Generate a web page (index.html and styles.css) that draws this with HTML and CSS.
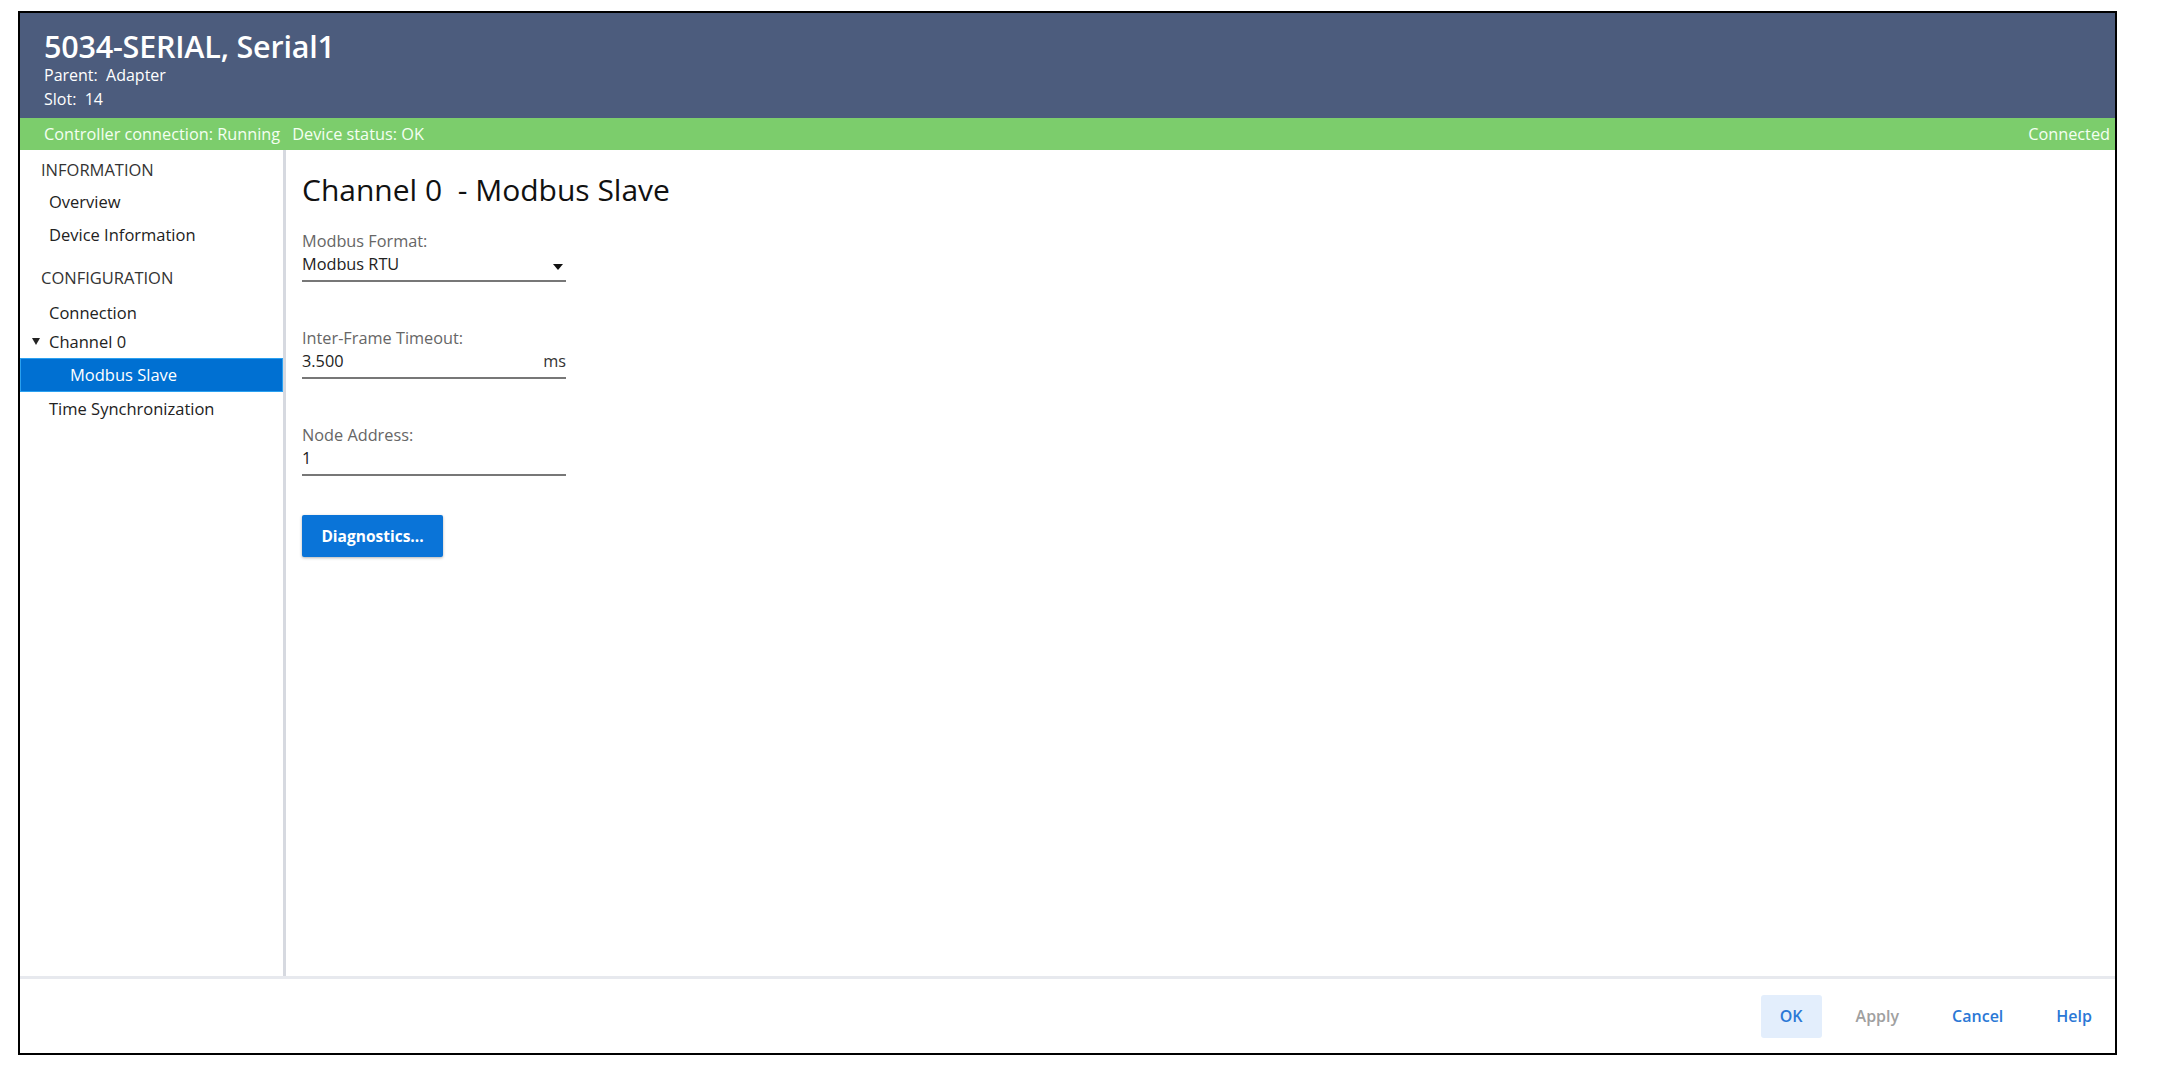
FILE: index.html
```html
<!DOCTYPE html>
<html lang="en">
<head>
    <meta charset="UTF-8">
    <title>5034-SERIAL, Serial1</title>
    <link rel="stylesheet" href="styles.css">
</head>
<body>
    <div class="frame">
        <div class="header">
            <h1 class="title">5034-SERIAL, Serial1</h1>
            <div class="meta">Parent:&nbsp; Adapter</div>
            <div class="meta">Slot:&nbsp; 14</div>
        </div>
        <div class="status">
            <span>Controller connection: Running</span>
            <span class="status-item">Device status: OK</span>
            <span class="status-right">Connected</span>
        </div>

        <div class="body">
            <div class="sidebar">
                <div class="section">INFORMATION</div>
                <div class="item">Overview</div>
                <div class="item">Device Information</div>
                <div class="section spaced">CONFIGURATION</div>
                <div class="item short">Connection</div>
                <div class="item tree"><span class="caret"></span>Channel 0</div>
                <div class="item sub selected">Modbus Slave</div>
                <div class="item">Time Synchronization</div>
            </div>

            <div class="content">
                <h2 class="heading">Channel 0&nbsp; - Modbus Slave</h2>

                <div class="field">
                    <div class="label">Modbus Format:</div>
                    <div class="value">
                        <span>Modbus RTU</span>
                        <span class="dropdown"></span>
                    </div>
                </div>

                <div class="field">
                    <div class="label">Inter-Frame Timeout:</div>
                    <div class="value">
                        <span>3.500</span>
                        <span class="unit">ms</span>
                    </div>
                </div>

                <div class="field">
                    <div class="label">Node Address:</div>
                    <div class="value">
                        <span>1</span>
                    </div>
                </div>

                <button class="primary">Diagnostics...</button>
            </div>
        </div>

        <div class="footer">
            <button class="link active">OK</button>
            <button class="link disabled">Apply</button>
            <button class="link">Cancel</button>
            <button class="link">Help</button>
        </div>
    </div>
</body>
</html>
```

FILE: styles.css
```css
body {
    margin: 0;
    padding: 0;
    background: #fff;
    font-family: "Open Sans", "Noto Sans", sans-serif;
    color: #222;
}
.frame {
    box-sizing: border-box;
    width: 2099px;
    height: 1044px;
    margin: 11px 0 0 18px;
    border: 2px solid #000;
    display: flex;
    flex-direction: column;
}
.header {
    background: #4c5c7d;
    color: #fff;
    height: 105px;
    padding: 0 24px;
    box-sizing: border-box;
}
.title {
    margin: 0;
    padding-top: 17px;
    font-size: 30.5px;
    font-weight: 600;
    line-height: 33px;
    letter-spacing: -0.2px;
}
.meta {
    font-size: 16px;
    line-height: 24px;
}
.status {
    background: #7ccd6c;
    color: #f4fff2;
    height: 32px;
    display: flex;
    align-items: center;
    padding: 0 5px 0 24px;
    font-size: 16.3px;
}
.status-item {
    margin-left: 12px;
}
.status-right {
    margin-left: auto;
}
.body {
    flex: 1;
    display: flex;
    min-height: 0;
    border-bottom: 3px solid #e7e9ee;
}
.sidebar {
    width: 263px;
    border-right: 3px solid #d6d9e0;
    padding-top: 5px;
    font-size: 16.5px;
    color: #222;
}
.section {
    height: 30px;
    line-height: 30px;
    padding-left: 21px;
    color: #333;
}
.section.spaced {
    margin-top: 12px;
    height: 33px;
}
.item {
    height: 33px;
    line-height: 33px;
    padding-left: 29px;
    position: relative;
}
.item.short {
    height: 29px;
    line-height: 34px;
}
.item.sub {
    padding-left: 50px;
    height: 34px;
    line-height: 34px;
}
.caret {
    position: absolute;
    left: 12px;
    top: 13px;
    width: 0;
    height: 0;
    border-left: 4.5px solid transparent;
    border-right: 4.5px solid transparent;
    border-top: 7px solid #222;
}
.selected {
    background: #0070d2;
    color: #fff;
    box-shadow: inset 0 0 0 1px #2aa0f0;
}
.content {
    flex: 1;
    padding: 20px 16px;
}
.heading {
    margin: 0;
    font-size: 30px;
    font-weight: 400;
    line-height: 40px;
    color: #111;
}
.field {
    width: 264px;
    margin-top: 45px;
}
.heading + .field {
    margin-top: 20px;
}
.label {
    font-size: 16.3px;
    line-height: 22px;
    color: #666;
}
.value {
    display: flex;
    justify-content: space-between;
    align-items: center;
    font-size: 16.3px;
    line-height: 24px;
    padding-bottom: 4px;
    border-bottom: 2px solid #777;
    color: #222;
}
.dropdown {
    width: 0;
    height: 0;
    margin: 6px 3px 0 0;
    border-left: 5px solid transparent;
    border-right: 5px solid transparent;
    border-top: 6px solid #111;
}
.unit {
    color: #333;
}
.primary {
    margin-top: 39px;
    width: 141px;
    height: 42px;
    background: #0a74d8;
    color: #fff;
    border: none;
    border-radius: 2px;
    box-shadow: 0 1px 3px rgba(0, 0, 0, 0.3);
    font-family: inherit;
    font-size: 15.5px;
    font-weight: 700;
    cursor: pointer;
}
.footer {
    height: 74px;
    display: flex;
    justify-content: flex-end;
    align-items: center;
    gap: 15px;
    padding-right: 4px;
}
.link {
    height: 43px;
    padding: 0 19px;
    background: transparent;
    border: none;
    border-radius: 3px;
    font-family: inherit;
    font-size: 16px;
    font-weight: 600;
    color: #2b78d6;
    cursor: pointer;
}
.link.active {
    background: #e3eefc;
}
.link.disabled {
    color: #a0a0a0;
}
```
